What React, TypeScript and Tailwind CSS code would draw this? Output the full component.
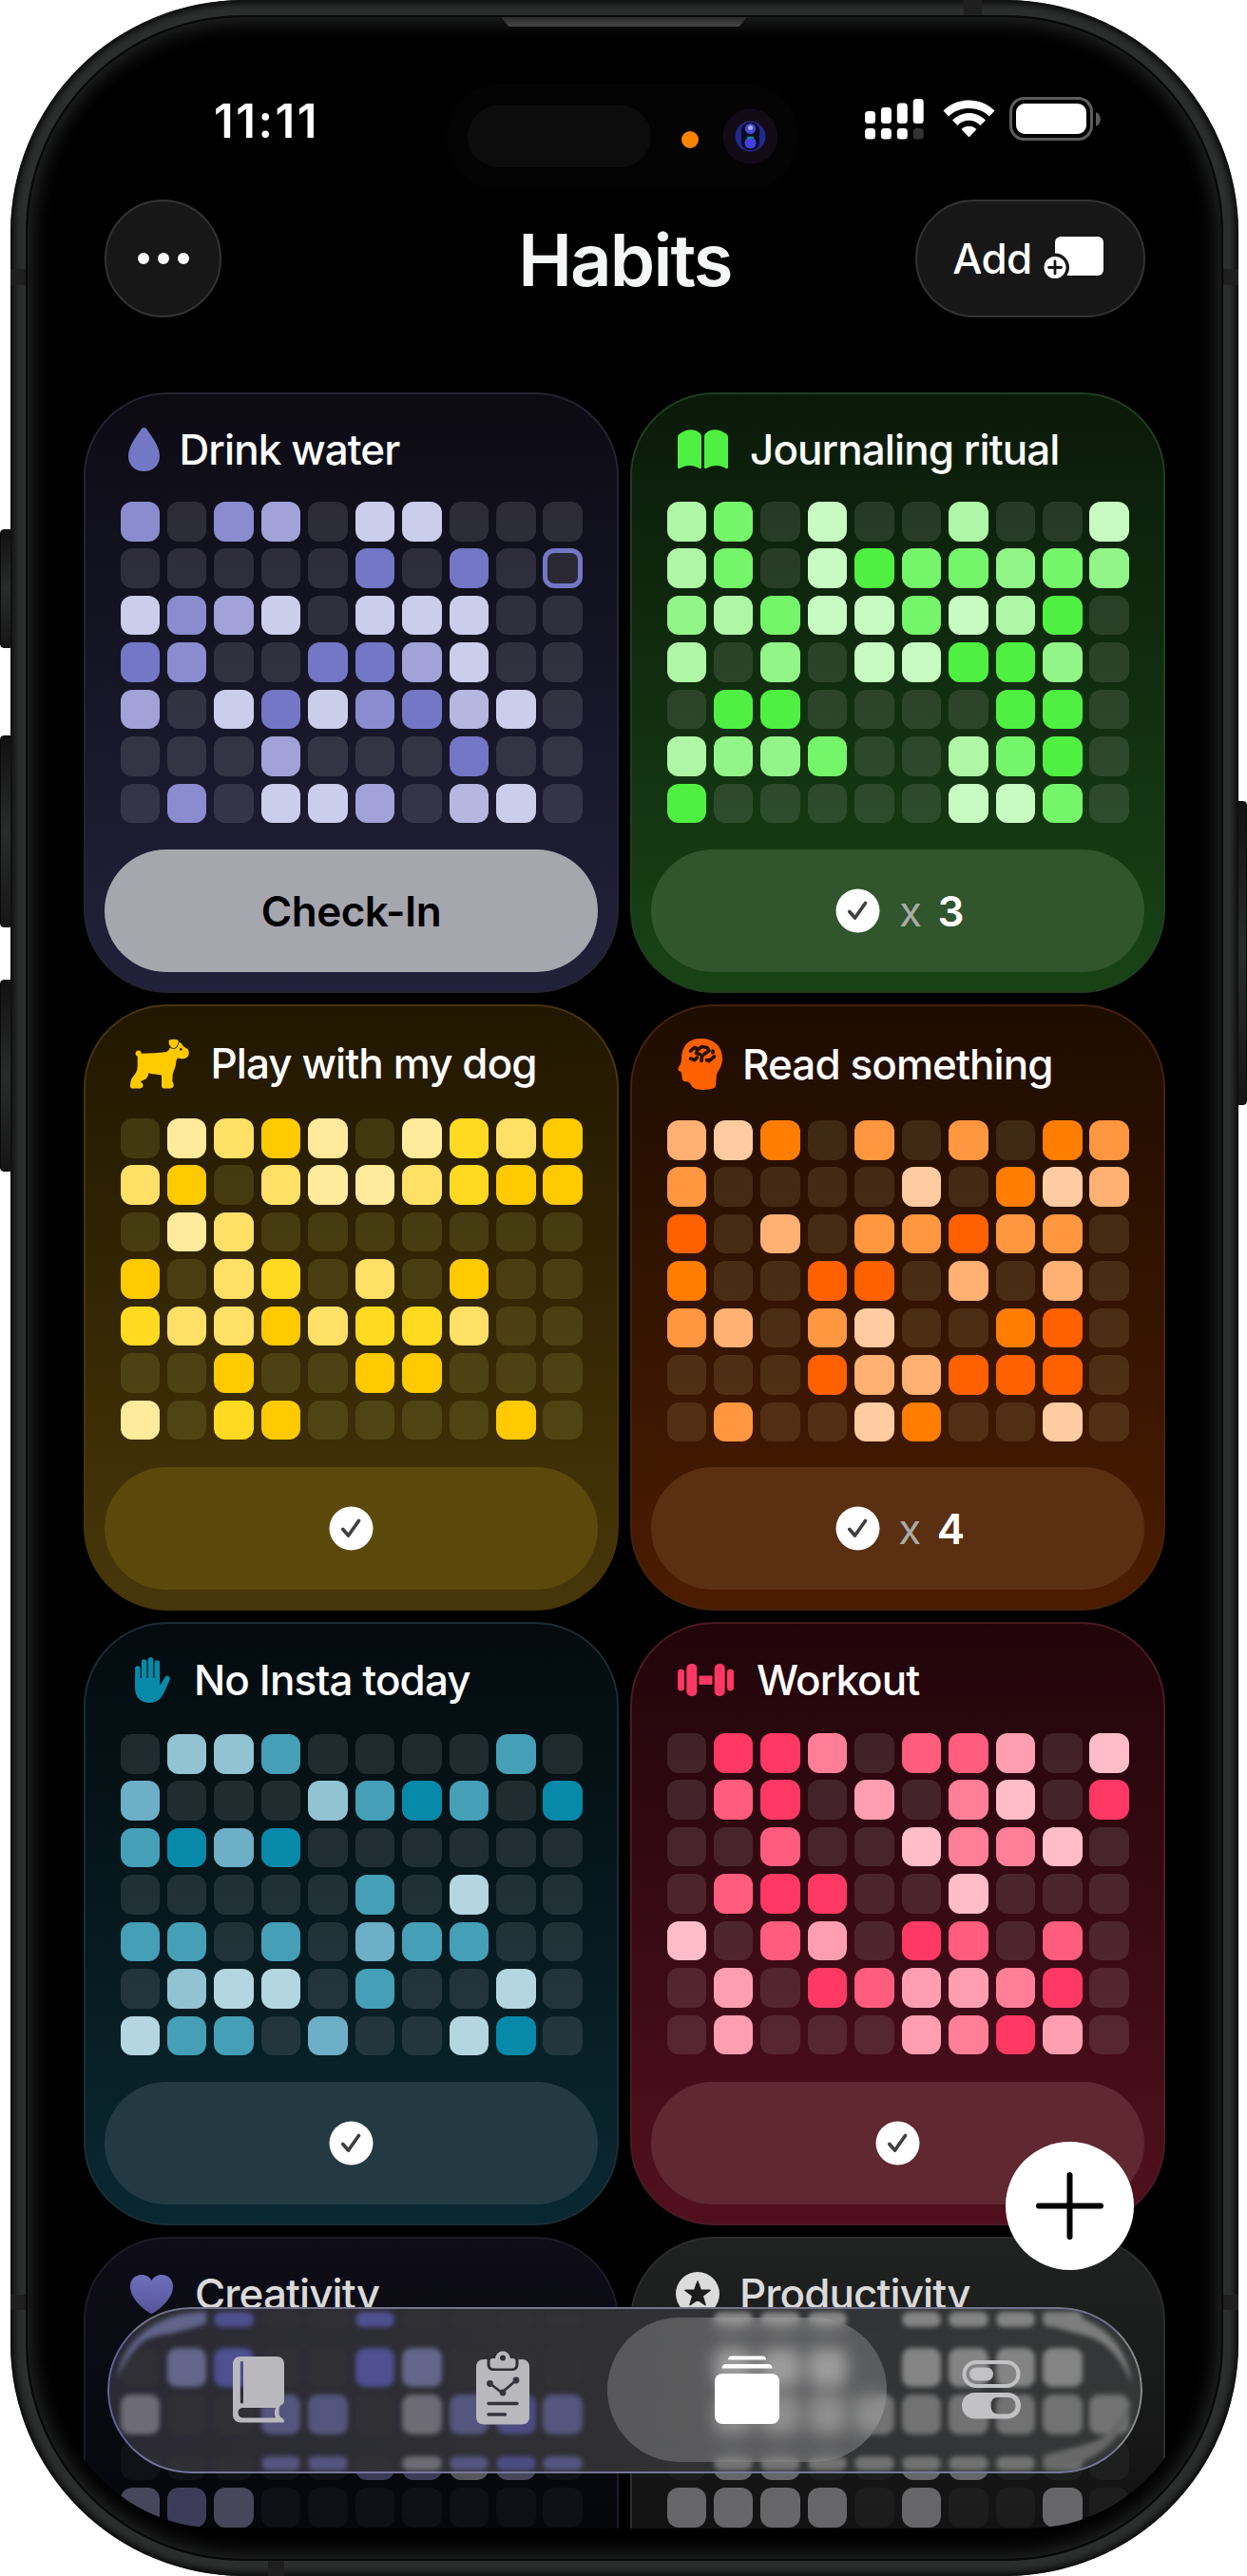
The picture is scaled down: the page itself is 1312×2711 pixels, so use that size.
import React from "react";

type Habit = {
  title: string;
  titleColor?: string;
  icon: React.ReactNode;
  // left slot that holds the icon, the title starts where it ends
  slot: string;
  card: string;
  header: string;
  empty: string;
  shades: string[];
  rows: string[];
  button: string;
  done?: number;
};

const DropIcon = () => (
  <svg width="33" height="46" viewBox="0 0 33 46" fill="#7476c6">
    <path d="M16.500 0C18 0 19 1 20 2.500C25 10 33 20 33 30C33 40 26 46 16.500 46S0 40 0 30C0 20 8 10 13 2.500C14 1 15 0 16.500 0Z" />
  </svg>
);

const BookIcon = () => (
  <svg width="53" height="42" viewBox="0 0 53 42" fill="#50f043">
    <path d="M0 8C0 6 1 5 3 4C9 -1 18 -1 23 3.500C24.500 4.700 25 6 25 8V40C25 41 24 41.500 23 41C16 37 9 37 2 41C1 41.500 0 41 0 40Z" />
    <path d="M53 8C53 6 52 5 50 4C44 -1 35 -1 30 3.500C28.500 4.700 28 6 28 8V40C28 41 29 41.500 30 41C37 37 44 37 51 41C52 41.500 53 41 53 40Z" />
  </svg>
);

const DogIcon = () => (
  <svg width="62" height="53" viewBox="81 28 186 158">
    <path
      fill="#ffca00"
      d="M107 65C113 65 117 69 116 75L158 73L192 70C204 68 206 56 212 46C220 34 238 36 244 45C247 50 251 55 256 57C264 60 267 66 266 74C265 85 258 91 248 91C242 92 236 90 231 89C226 92 226 102 225 110C223 122 217 130 215 142L214 163C219 168 219 174 217 179C215 184 210 185 204 185H188C182 185 180 181 180 175V143C166 139 152 141 140 136C137 146 134 154 126 157C119 160 113 161 113 164C120 166 123 173 121 179C119 184 114 185 108 185H88C83 185 81 182 81 176C82 164 83 155 91 147C98 140 104 128 104 117L104 90C104 87 105 85 103 83C98 80 97 77 98 73C99 68 102 65 107 65Z"
    />
    <path
      fill="#ffca00"
      stroke="#241900"
      strokeWidth="4.500"
      strokeLinejoin="round"
      paintOrder="stroke"
      d="M204 32C212 28 226 29 233 33C234 42 229 58 217 58C206 56 200 42 204 32Z"
    />
    <circle cx="241" cy="61" r="3.800" fill="#2a1d00" />
  </svg>
);

const HeadIcon = () => (
  <svg width="47" height="54" viewBox="0 0 47 54">
    <path
      fill="#ff6000"
      d="M24 0C38 0 47 8 47 21C47 29 43 33 41 38L40 49C40 51 39 52 37 52.500C33 54 24 54.500 19 53C15 51.500 14 48 12 46C10 45 7 46 5.500 44C4 42 5 38 3.500 35C1 34 0 33 0.500 31C2 28 4 26 4 22C4 8 11 0 24 0Z"
    />
    <g stroke="#260f00" strokeWidth="3.600" strokeLinecap="round" strokeLinejoin="round" fill="none">
      <path d="M13.500 13L17.500 9.500L22 11L25.500 8.500L31 9.500L33 13L29 15.500" />
      <path d="M21 11.500L19.500 15.500L23.500 16.500" />
      <path d="M13.500 21L18 22.500L20.500 20" />
      <path d="M29 15.500L25.500 18.500L25 23.500" />
      <path d="M37 13V15M38.500 19L33 23.500M33 23.500L30.500 22.500" />
    </g>
  </svg>
);

const HandIcon = () => (
  <svg width="37" height="48" viewBox="0 0 37 48">
    <g stroke="#0789a9" strokeWidth="5.600" strokeLinecap="round">
      <path d="M2.900 12V30M9.700 5V26M16.500 2.800V26M23.300 6V28" />
      <path d="M34 22.500L26 36" />
    </g>
    <path
      fill="#0789a9"
      d="M0.100 22H26.100V29C29 28 30 24 31.800 21.500L36.500 23.500C34 30 31 38 27 43C24 46.500 20 48 15 48C6 48 0.100 42 0.100 33Z"
    />
  </svg>
);

const DumbbellIcon = () => (
  <svg width="59" height="34" viewBox="0 0 59 34" fill="#ff3864">
    <rect x="0" y="5.500" width="7" height="23" rx="3.500" />
    <rect x="9.300" y="0" width="11" height="34" rx="5" />
    <rect x="22.500" y="12.500" width="14" height="9.500" rx="1" />
    <rect x="38.700" y="0" width="11" height="34" rx="5" />
    <rect x="52" y="5.500" width="7" height="23" rx="3.500" />
  </svg>
);

const HeartIcon = () => (
  <svg width="45" height="41" viewBox="0 0 45 41">
    <defs>
      <linearGradient id="heart" x1="0" y1="0" x2="0" y2="1">
        <stop offset="0" stopColor="#706fbc" />
        <stop offset="1" stopColor="#55549a" />
      </linearGradient>
    </defs>
    <path
      fill="url(#heart)"
      d="M22.500 41C20 41 0 27 0 12.500C0 5 5 0 12 0C17 0 20.500 2.500 22.500 6C24.500 2.500 28 0 33 0C40 0 45 5 45 12.500C45 27 25 41 22.500 41Z"
    />
  </svg>
);

const StarIcon = () => (
  <svg width="46" height="46" viewBox="0 0 46 46">
    <circle cx="23" cy="23" r="23" fill="#dcdcdc" />
    <path
      fill="#1c1c1c"
      stroke="#1c1c1c"
      strokeWidth="1.500"
      strokeLinejoin="round"
      d="M23 10L26.200 19L36 19.300L28.200 25.200L31 34.700L23 29.200L15 34.700L17.800 25.200L10 19.300L19.800 19Z"
    />
  </svg>
);

const CheckIcon = () => (
  <svg width="47" height="47" viewBox="0 0 47 47">
    <circle cx="23.500" cy="23.500" r="23" fill="#fff" />
    <path
      d="M14.800 24.500L20.500 31L31.500 15.500"
      fill="none"
      stroke="#000"
      strokeOpacity="0.750"
      strokeWidth="3.700"
      strokeLinecap="round"
      strokeLinejoin="round"
    />
  </svg>
);

const purple = ["bg-[#7476c6]", "bg-[#8b8bd0]", "bg-[#a2a2d9]", "bg-[#b6b6e1]", "bg-[#cccceb]"];

const habits: Habit[] = [
  {
    title: "Drink water",
    icon: <DropIcon />,
    slot: "w-[98.500px] pl-[45px]",
    card: "h-[632px] from-[#0c0b14] to-[#22213b] border-[#242331]",
    header: "h-[113px]",
    empty: "bg-white/12",
    shades: purple,
    rows: ["2.23.55...", ".....1.1.o", "5235.555..", "12..1135..", "3.5152145.", "...3...1..", ".2.553.45."],
    button: "bg-[#a6a6af]",
  },
  {
    title: "Journaling ritual",
    icon: <BookIcon />,
    slot: "w-[124px] pl-[48px]",
    card: "h-[632px] from-[#0a1a09] to-[#184315] border-[#1f3d20]",
    header: "h-[113px]",
    empty: "bg-white/11",
    shades: ["bg-[#50f043]", "bg-[#75f56a]", "bg-[#92f588]", "bg-[#aff7a6]", "bg-[#c8fbc1]"],
    rows: ["42.5..4..5", "42.5122323", "342552541.", "4.3.55113.", ".11....11.", "4332..421.", "1.....552."],
    button: "bg-[#31552d]",
    done: 3,
  },
  {
    title: "Play with my dog",
    icon: <DogIcon />,
    slot: "w-[131.500px] pl-[47px]",
    card: "h-[638px] from-[#211700] to-[#48370a] border-[#46350a]",
    header: "h-[118px]",
    empty: "bg-[#8a8a40]/25",
    shades: ["bg-[#ffca00]", "bg-[#ffda20]", "bg-[#ffe066]", "bg-[#ffeb9b]"],
    rows: [".4314.4231", "31.3443211", ".43.......", "1.32.3.1..", "23313223..", "..1..11...", "4.21....1."],
    button: "bg-[#5b480b]",
    done: 1,
  },
  {
    title: "Read something",
    icon: <HeadIcon />,
    slot: "w-[116px] pl-[48px]",
    card: "h-[638px] from-[#1e0c00] to-[#4c1c00] border-[#44220c]",
    header: "h-[120px]",
    empty: "bg-[#b0a070]/18",
    shades: ["bg-[#ff6000]", "bg-[#ff7d00]", "bg-[#ff9640]", "bg-[#ffb073]", "bg-[#ffcba1]"],
    rows: ["452.3.3.23", "3....5.254", "1.4.33133.", "2..11.4.4.", "34.35..21.", "...144111.", ".3..52..5."],
    button: "bg-[#5a2f12]",
    done: 4,
  },
  {
    title: "No Insta today",
    icon: <HandIcon />,
    slot: "w-[114px] pl-[52px]",
    card: "h-[635px] from-[#030b0e] to-[#0a2831] border-[#1a2d34]",
    header: "h-[116px]",
    empty: "bg-white/11",
    shades: ["bg-[#0789a9]", "bg-[#459fb7]", "bg-[#6dafc6]", "bg-[#92c3d2]", "bg-[#b3d6e0]"],
    rows: [".442....2.", "3...4212.1", "2131......", ".....2.5..", "22.2.322..", ".455.2..5.", "522.3..51."],
    button: "bg-[#233a42]",
    done: 1,
  },
  {
    title: "Workout",
    icon: <DumbbellIcon />,
    slot: "w-[131px] pl-[47.500px]",
    card: "h-[635px] from-[#21050a] to-[#52101e] border-[#4a1a24]",
    header: "h-[115px]",
    empty: "bg-white/11",
    shades: ["bg-[#ff3864]", "bg-[#ff5c7e]", "bg-[#ff7e98]", "bg-[#ff9eb1]", "bg-[#ffbcc9]"],
    rows: [".113.224.5", ".21.4.35.1", "..2..5335.", ".211..5...", "5.24.12.2.", ".4.124431.", ".4...4314."],
    button: "bg-[#602831]",
    done: 1,
  },
  {
    title: "Creativity",
    titleColor: "text-[#dadada]",
    icon: <HeartIcon />,
    slot: "w-[115px] pl-[47px]",
    card: "h-[635px] from-[#0e0d18] via-[#06070b] via-50% to-[#06070b] border-[#1c1b26]",
    header: "h-[114px]",
    empty: "bg-white/4",
    shades: ["bg-[#3d3c58]", "bg-[#47465a]", "bg-[#57565d]"],
    rows: ["..........", "..........", ".....1132.", "212.......", "..........", "..........", ".........."],
    button: "bg-[#333]",
    done: 1,
  },
  {
    title: "Productivity",
    titleColor: "text-[#dadada]",
    icon: <StarIcon />,
    slot: "w-[113px] pl-[46px]",
    card: "h-[635px] from-[#202121] via-[#121212] via-50% to-[#121212] border-[#2b2c2c]",
    header: "h-[114px]",
    empty: "bg-white/4",
    shades: ["bg-[#666567]"],
    rows: ["..........", "..........", ".11..11...", "1111.1..1.", "..........", "..........", ".........."],
    button: "bg-[#333]",
    done: 1,
  },
];

const HabitCard = ({ habit }: { habit: Habit }) => {
  const cells = habit.rows.join("").split("");
  return (
    <div
      className={`flex flex-col rounded-[88px] border-2 bg-linear-to-b pb-[20px] ${habit.card}`}
    >
      <div className={`flex shrink-0 items-center pt-[2px] ${habit.header}`}>
        <div className={`shrink-0 ${habit.slot}`}>{habit.icon}</div>
        <h2
          className={`text-[44px] leading-[54px] font-medium tracking-[-0.021em] whitespace-nowrap ${habit.titleColor || "text-white"}`}
        >
          {habit.title}
        </h2>
      </div>
      <div className="ml-[36.500px] grid w-[486.500px] grid-cols-10 gap-[7.950px]">
        {cells.map((c, i) => (
          <div
            key={i}
            className={`h-[41.500px] rounded-[12px] ${
              c === "."
                ? habit.empty
                : c === "o"
                  ? "border-[5.500px] border-[#7476c6] bg-[#292833]"
                  : habit.shades[Number(c) - 1]
            }`}
          />
        ))}
      </div>
      <button
        className={`mx-auto mt-auto flex h-[129px] w-[519px] shrink-0 items-center justify-center rounded-full text-[44px] font-semibold ${habit.button}`}
      >
        {habit.done ? (
          <>
            <CheckIcon />
            {habit.done > 1 && (
              <>
                <span className="ml-[19.500px] font-normal text-[#a9aca9]">x</span>
                <span className="mr-[-5px] ml-[16.500px] text-white">{habit.done}</span>
              </>
            )}
          </>
        ) : (
          <span className="tracking-[-0.011em] text-black">Check-In</span>
        )}
      </button>
    </div>
  );
};

const StatusIcons = () => (
  <svg width="250" height="48" viewBox="0 0 250 48" fill="#fff">
    <rect x="0" y="15" width="11" height="13" rx="3.500" />
    <rect x="16.900" y="11" width="11" height="17" rx="3.500" />
    <rect x="33.800" y="6.500" width="11" height="21.500" rx="3.500" />
    <rect x="50.700" y="2" width="11" height="26" rx="3.500" />
    <rect x="0" y="33" width="11" height="11.500" rx="3.500" />
    <rect x="16.900" y="33" width="11" height="11.500" rx="3.500" />
    <rect x="33.800" y="33" width="11" height="11.500" rx="3.500" />
    <rect x="50.700" y="33" width="11" height="11.500" rx="3.500" fill="#333" />
    <path d="M82.500 14.500C97 -0.300 122 -0.300 136.500 14.500L131 20.500C119.500 9 99.500 9 88 20.500Z" />
    <path d="M92 24.500C102 14.500 117 14.500 127 24.500L121.500 30C114.500 23 104.500 23 97.500 30Z" />
    <path d="M101.500 34C106 29.500 113 29.500 117.500 34L110.500 41.500C109.800 42.200 109.200 42.200 108.500 41.500Z" />
    <rect x="153.500" y="1.500" width="85" height="43" rx="14" fill="none" stroke="#5c5c5e" strokeWidth="3" />
    <rect x="159" y="7" width="74" height="32" rx="9" />
    <path d="M243 16C249.500 18 249.500 29 243 31Z" fill="#5c5c5e" />
  </svg>
);

const AddCardIcon = () => (
  <svg width="63" height="46" viewBox="0 0 63 46" className="mt-[-3px] mr-[5px] ml-[12px]">
    <rect x="12" y="1" width="51" height="41" rx="6" fill="#fff" />
    <circle cx="12" cy="33.500" r="15" fill="#171717" />
    <circle cx="12" cy="33.500" r="11.500" fill="#fff" />
    <path d="M12 27V40M5.500 33.500H18.500" stroke="#171717" strokeWidth="2.800" strokeLinecap="round" />
  </svg>
);

// strips refracted through the glass bar, one character per grid column
const glassRows = [
  { pos: "mt-[5px] h-[16px]", left: "..b..c....", right: ".ddd.dddd." },
  { pos: "mt-[22px] h-[41px]", left: ".ab..ba...", right: ".ddd.dddd." },
  { pos: "mt-[8px] h-[42px]", left: "g..ee.gefe", right: ".hhhhhhhhh" },
  { pos: "mt-[23px] h-[15px]", left: "...ee.gefe", right: ".hhhhhhhh." },
];

const glassShade: Record<string, string> = {
  ".": "bg-[#343436]/50",
  a: "bg-[#65668b]",
  b: "bg-[#504f90]",
  c: "bg-[#504f90]",
  d: "bg-[#848484]",
  e: "bg-[#56557f]",
  f: "bg-[#4d4c82]",
  g: "bg-[#6d6c76]",
  h: "bg-[#727272]",
};

const GlassStrip = ({ cols }: { cols: string }) => (
  <div className="grid w-[486.500px] shrink-0 grid-cols-10 gap-[7.950px]">
    {cols.split("").map((c, i) => (
      <div key={i} className={`rounded-[10px] ${glassShade[c]}`} />
    ))}
  </div>
);

const JournalIcon = () => (
  <svg width="54" height="70" viewBox="0 0 54 70" fill="#b9b8bd">
    <path
      fillRule="evenodd"
      d="M8 0H46C51 0 54 3 54 8V46C54 49 53 50 51 51C49 52 48.500 54 48.500 58C48.500 62 49.500 63.500 52 65C53.500 66 54 67 54 68C54 69 53.500 69.500 52 69.500H9C3 69.500 0 66 0 61V8C0 3 3 0 8 0ZM9.300 5C8.300 5 7.800 5.500 7.800 6.500V47.500C7.800 49 8.500 49.500 9.500 49.500S11 49 11 47.500V6.500C11 5.500 10.500 5 9.300 5ZM11 54C7.500 54 5.500 56 5.500 59S7.500 64.500 11 64.500H45C43.500 61 43.500 57.500 45 54Z"
    />
  </svg>
);

const ClipboardIcon = () => (
  <svg width="56" height="78" viewBox="0 0 56 78">
    <path
      fill="#b9b8bd"
      d="M8 9H11.500V14C11.500 18.500 14 21 18.500 21H37.500C42 21 44.500 18.500 44.500 14V9H48C53 9 56 12 56 17V69.500C56 74.500 53 77.500 48 77.500H8C3 77.500 0 74.500 0 69.500V17C0 12 3 9 8 9Z"
    />
    <path
      fill="#b9b8bd"
      fillRule="evenodd"
      d="M20 8C21 3 24 0.500 28 0.500S35 3 36 8H38.500C40.500 8 41.500 9 41.500 11V14C41.500 17 40 18.500 37 18.500H19C16 18.500 14.500 17 14.500 14V11C14.500 9 15.500 8 17.500 8ZM28 4.500A3 3 0 1 0 28 10.500A3 3 0 1 0 28 4.500Z"
    />
    <g stroke="#34343c" fill="#34343c" strokeWidth="2.800" strokeLinecap="round">
      <path d="M14 34L27 44L42 31" fill="none" />
      <circle cx="14.500" cy="34.500" r="2" />
      <circle cx="28" cy="44" r="2" />
      <circle cx="42" cy="31" r="2" />
      <path d="M13 55.500H43M13 67H30.500" strokeWidth="3.400" />
    </g>
  </svg>
);

const StackIcon = () => (
  <svg width="68" height="72" viewBox="0 0 68 72" fill="#fff">
    <path d="M18 0.500H50C52.500 0.500 54 2 54 4.500H14C14 2 15.500 0.500 18 0.500Z" />
    <path d="M12 9H56C59 9 60.500 10.500 60.500 13.500H7.500C7.500 10.500 9 9 12 9Z" />
    <rect x="0" y="19" width="68" height="53" rx="8" />
  </svg>
);

const TogglesIcon = () => (
  <svg width="62" height="62" viewBox="0 0 62 62">
    <rect x="2.500" y="2" width="57" height="25" rx="12.500" fill="none" stroke="#c2c2c5" strokeWidth="4" />
    <rect x="8" y="7.500" width="25" height="14" rx="7" fill="#c2c2c5" />
    <path
      fill="#c2c2c5"
      fillRule="evenodd"
      d="M14 34H48C56 34 62 39.500 62 47.500S56 61.500 48 61.500H14C6 61.500 0 55.500 0 47.500S6 34 14 34ZM38 39C33 39 30.500 42 30.500 47.500S33 56.500 38 56.500H48C53 56.500 56.500 53 56.500 47.500S53 39 48 39Z"
    />
  </svg>
);

const TabBar = () => (
  <div className="absolute top-[2377.500px] left-[59px] h-[175px] w-[1089px] overflow-hidden rounded-full bg-linear-to-r from-[#2b2a35] via-[#303033] to-[#363838]">
    <div className="absolute inset-0 blur-[2.500px]">
      {glassRows.map((r, i) => (
        <div key={i} className={`flex gap-[88.500px] pl-[13.500px] ${r.pos}`}>
          <GlassStrip cols={r.left} />
          <GlassStrip cols={r.right} />
        </div>
      ))}
      {/* light bending round the ends */}
      <svg className="absolute inset-0" width="1089" height="175" viewBox="0 0 1089 175">
        <path d="M104 5V17C76 28 56 28 41 34C28 42 18 58 10 76C16 36 50 5 104 5Z" fill="#62638a" />
        <path d="M985 5V17C1010 27 1030 28 1044 36C1060 46 1070 62 1077 80C1074 40 1042 5 985 5Z" fill="#7d7d7d" />
        <path d="M985 170V156C1012 148 1030 146 1046 138C1060 128 1070 112 1077 96C1074 134 1042 170 985 170Z" fill="#686868" />
      </svg>
    </div>
    <div className="relative grid h-full grid-cols-4 px-[30px]">
      <div className="flex items-center justify-center">
        <JournalIcon />
      </div>
      <div className="flex items-center justify-center pb-[5px]">
        <ClipboardIcon />
      </div>
      <div className="flex items-center justify-center">
        <div className="flex h-[152px] w-[294px] shrink-0 items-center justify-center rounded-full bg-white/20 backdrop-blur-[8px]">
          <StackIcon />
        </div>
      </div>
      <div className="flex items-center justify-center">
        <TogglesIcon />
      </div>
    </div>
    <div className="absolute inset-0 rounded-full border-2 border-t-[#73738a] border-r-[#8c8c90] border-b-[#77779a] border-l-[#6464a2]" />
  </div>
);

const Island = () => (
  <div className="absolute top-[38px] left-[416px] h-[112px] w-[371px] rounded-full bg-[#030303]">
    <div className="absolute top-[23px] left-[22px] h-[65px] w-[193px] rounded-full bg-[#0c0c0c]" />
    <div className="absolute top-[50px] left-[247px] h-[18px] w-[18px] rounded-full bg-[#ff8200]" />
    <svg className="absolute top-[26px] left-[290px]" width="59" height="59" viewBox="0 0 59 59">
      <circle cx="29.500" cy="29.500" r="29" fill="#120b16" />
      <circle cx="29.500" cy="29.500" r="16" fill="#22288c" />
      <rect x="20" y="15" width="19" height="29" rx="8" fill="#0a0b1e" />
      <circle cx="29.500" cy="21.500" r="5.500" fill="#4a48d8" />
      <circle cx="29.500" cy="20.500" r="2.500" fill="#a5a4f0" />
      <circle cx="29.500" cy="36.500" r="6" fill="#4340e0" />
      <rect x="26" y="29.500" width="7" height="3" rx="1.500" fill="#0e8298" />
    </svg>
  </div>
);

const SideButton = ({ place }: { place: string }) => (
  <div
    className={`absolute w-[14px] rounded-[4px] border border-[#0a0a0a] bg-linear-to-b from-[#111] via-[#2a2c2b] to-[#151515] ${place}`}
  />
);

const App = () => {
  return (
    <div className="relative h-[2711px] w-[1312px] overflow-hidden bg-white px-[10.500px] font-['Inter','Liberation_Sans',sans-serif]">
      <SideButton place="left-0 top-[557px] h-[125px]" />
      <SideButton place="left-0 top-[774px] h-[202px]" />
      <SideButton place="left-0 top-[1031px] h-[202px]" />
      <SideButton place="right-0 top-[843px] h-[320px]" />

      {/* metal frame */}
      <div className="relative h-[2711px] w-[1292px] overflow-hidden rounded-[245px] bg-[#2d2f2e] p-[16px] shadow-[inset_0_0_7px_4px_#0a0a0a]">
        <div className="absolute top-[283px] left-0 h-[17px] w-full bg-[#1e1f1e]" />
        <div className="absolute top-[2415px] left-0 h-[16px] w-full bg-[#1e1f1e]" />
        <div className="absolute top-0 left-[1003px] h-[16px] w-[19px] bg-[#1e1f1e]" />
        <div className="absolute bottom-0 left-[271px] h-[16px] w-[17px] bg-[#1e1f1e]" />
        <div className="relative h-[2679px] w-[1260px] rounded-[229px] border-2 border-[#080808] bg-black p-[25.500px] pt-[32px] shadow-[inset_0_0_22px_3px_#2a2c2b]">
          <div className="absolute top-0 left-[499px] h-[10px] w-[258px] bg-linear-to-b from-[#2c2c2c] to-[#454545] [clip-path:polygon(0_0,100%_0,97%_100%,3%_100%)]" />

          {/* screen */}
          <div className="relative h-[2611px] w-[1205px] overflow-hidden rounded-[178px] bg-black">
            <Island />
            <div className="flex h-[160px] items-start justify-between pt-[52px] pr-[99px] pl-[171px]">
              <div className="mt-[1px] text-[49px] leading-[50px] font-semibold tracking-[2.500px] text-white">
                11:11
              </div>
              <StatusIcons />
            </div>
            <div className="flex items-center justify-between pr-[54px] pl-[56px]">
              <div className="w-[242px]">
                <button className="flex h-[124px] w-[123px] items-center justify-center gap-[9px] rounded-full border-2 border-[#323333] bg-[#171717]">
                  <span className="h-[12px] w-[12px] rounded-full bg-white" />
                  <span className="h-[12px] w-[12px] rounded-full bg-white" />
                  <span className="h-[12px] w-[12px] rounded-full bg-white" />
                </button>
              </div>
              <h1 className="mt-[2px] text-[76px] leading-[90px] font-semibold tracking-[-0.024em] text-[#f5f7f7]">
                Habits
              </h1>
              <button className="flex h-[124px] w-[242px] items-center justify-center rounded-full border-2 border-[#323333] bg-[#171717] text-[44px] font-medium tracking-[-0.015em] text-white">
                Add
                <AddCardIcon />
              </button>
            </div>
            <div className="mt-[79px] grid grid-cols-[563px_563px] gap-[12px] pl-[34px]">
              {habits.map((habit) => (
                <HabitCard key={habit.title} habit={habit} />
              ))}
            </div>
            <button className="absolute top-[2204px] left-[1004px] flex h-[135px] w-[135px] items-center justify-center rounded-full bg-white">
              <svg width="71" height="71" viewBox="0 0 71 71">
                <path d="M35.500 3V68M3 35.500H68" stroke="#000" strokeWidth="6" strokeLinecap="round" />
              </svg>
            </button>
            <TabBar />
          </div>
        </div>
      </div>
    </div>
  );
};

export default App;
